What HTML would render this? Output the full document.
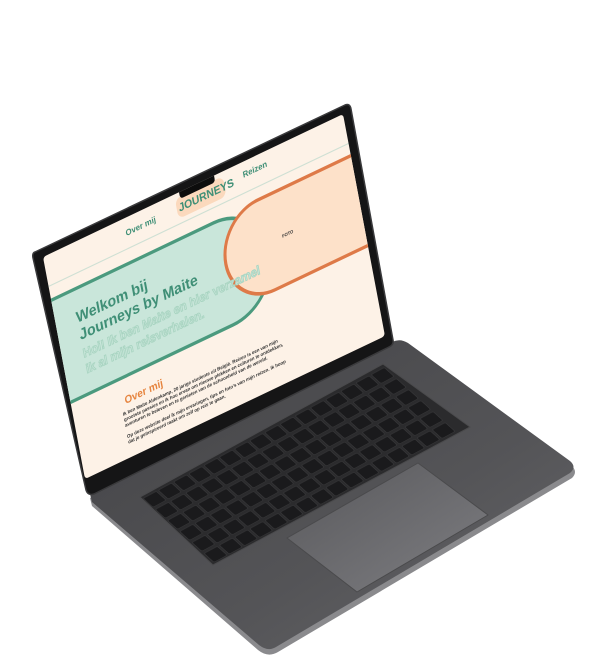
<!DOCTYPE html>
<html><head><meta charset="utf-8"><style>
html,body{margin:0;padding:0;background:#fff;width:605px;height:668px;overflow:hidden;position:relative}
#scr{position:absolute;left:0;top:0;width:600px;height:400px;transform-origin:0 0;transform:matrix(0.5,-0.2383,0.105,0.555,43,257);background:#fdf2e7;overflow:hidden;font-family:"Liberation Sans",sans-serif;border-radius:6px}
.abs{position:absolute}
</style></head><body>
<svg width="605" height="668" style="position:absolute;left:0;top:0">
<defs>
<linearGradient id="bg" x1="0" y1="0" x2="1" y2="1">
<stop offset="0" stop-color="#434346"/><stop offset="0.6" stop-color="#545457"/><stop offset="1" stop-color="#67676a"/></linearGradient>
<linearGradient id="tp" x1="0" y1="0" x2="1" y2="1">
<stop offset="0" stop-color="#58585b"/><stop offset="1" stop-color="#7e7e82"/></linearGradient>
<pattern id="keys" width="1" height="1" patternUnits="userSpaceOnUse">
<rect x="0.07" y="0.09" width="0.86" height="0.8" rx="0.08" fill="#1a1a1c" stroke="#3a3a3c" stroke-width="0.03"/>
</pattern>
</defs>
<path d="M90 498 L392 346 Q400 342 408 347 L572 466 Q578 472 572 478 L278 652 Q268 658 258 650 L92 506 Z" fill="#8a8a8d"/>
<path d="M90 494 L392 342 Q400 338 408 343 L570 461 Q577 467 570 473 L276 647 Q268 652 259 645 L92 502 Z" fill="url(#bg)"/>
<path d="M140 497 L383 364 L470 427 L213 565 Z" fill="#2b2b2d" stroke="#4a4a4c" stroke-width="1"/>
<g transform="matrix(15.2,-8.25,12.2,11,141,498)">
<rect x="0" y="0" width="16" height="6" fill="url(#keys)"/>
</g>
<path d="M287 538 L418 463 L488 515 L357 592 Z" fill="url(#tp)" stroke="#4a4a4c" stroke-width="1" stroke-linejoin="round"/>
<path d="M35 252 L345 105 Q350 103 351 109 L393 340 Q394 345 389 347 L94 494 Q88 496 86 490 L33 258 Q32 253 35 252 Z" fill="#151516" stroke="#3a3a3c" stroke-width="1.5" stroke-linejoin="round"/>
</svg>
<div id="scr">
  <div class="abs" style="left:0;top:52px;width:600px;height:1.5px;background:#cfe0d4"></div>
  <div class="abs" style="left:160px;top:18px;font-size:15px;font-weight:bold;color:#3f8f76">Over mij</div>
  <div class="abs" style="left:395px;top:14px;font-size:15px;font-weight:bold;color:#3f8f76">Reizen</div>
  <div class="abs" style="left:262px;top:8px;width:96px;height:36px;border-radius:12px;background:#fbd9bd"></div>
  <div class="abs" style="left:266px;top:16px;font-size:20px;font-weight:bold;color:#3f8f76">JOURNEYS</div>
  <div class="abs" style="left:272px;top:-4px;width:70px;height:16px;border-radius:0 0 6px 6px;background:#0d0d0d"></div>
  <div class="abs" style="left:-120px;top:75px;width:540px;height:190px;border-radius:95px;background:#c9e6da;border:6px solid #4b9a7e;box-sizing:border-box"></div>
  <div class="abs" style="left:330px;top:72px;width:420px;height:168px;border-radius:84px;background:#fde1c9;border:6px solid #de7a48;box-sizing:border-box"></div>
  <div class="abs" style="left:446px;top:150px;font-size:8px;font-weight:bold;color:#333">FOTO</div>
  <div class="abs" style="left:40px;top:112px;font-size:27px;line-height:31px;font-weight:bold;color:#3f8f76">Welkom bij<br>Journeys by Maite</div>
  <div class="abs" style="left:40px;top:178px;font-size:22px;line-height:28px;font-weight:bold;color:#c9e6da;-webkit-text-stroke:1.5px #a8d4c1">Hoi! Ik ben Maite en hier verzamel<br>ik al mijn reisverhalen.</div>
  <div class="abs" style="left:100px;top:292px;font-size:19px;font-weight:bold;color:#e6843e">Over mij</div>
  <div class="abs" style="left:92px;top:318px;width:320px;font-size:8.5px;line-height:10px;font-weight:bold;color:#333">Ik ben Maite Aldenkamp, 20 jarige studente uit België. Reizen is een van mijn grootste passies en ik hou ervan om nieuwe plekken en culturen te ontdekken, avonturen te beleven en te genieten van de schoonheid van de wereld.<br><br>Op deze website deel ik mijn ervaringen, tips en foto's van mijn reizen. Ik hoop dat je geïnspireerd raakt om zelf op reis te gaan.</div>
</div>
</body></html>
